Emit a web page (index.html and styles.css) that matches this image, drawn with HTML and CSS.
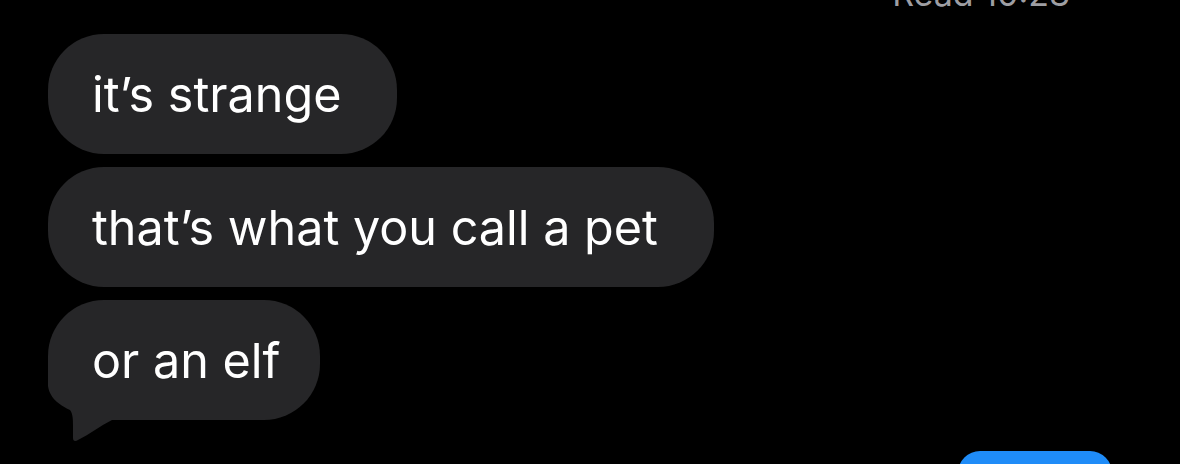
FILE: index.html
```html
<!DOCTYPE html>
<html lang="en">
<head>
<meta charset="utf-8">
<title>Messages</title>
<link rel="stylesheet" href="styles.css">
</head>
<body>
<main class="thread">
  <div class="receipt">Read 10:23</div>
  <div class="group">
    <div class="bubble"><span class="text">it’s strange</span></div>
    <div class="bubble"><span class="text">that’s what you call a pet</span></div>
    <div class="bubble bubble-tail">
      <svg class="tail" width="70" height="84" viewBox="0 0 70 84" aria-hidden="true">
        <path d="M0,0 L0,26 C2,40 14,46 22,50 C25,54 25,60 25,66 L25,78 C25,81 27,82 30,80 C42,74 52,66 64,60 L70,60 L70,0 Z" fill="#262628"/>
      </svg>
      <span class="text">or an elf</span>
    </div>
  </div>
  <div class="outgoing">
    <div class="bubble-blue"></div>
  </div>
</main>
</body>
</html>
```

FILE: styles.css
```css
html, body {
  margin: 0;
  padding: 0;
  background: #000;
  height: 100%;
  overflow: hidden;
}

.thread {
  font-family: Inter, "Liberation Sans", sans-serif;
  color: #fff;
  display: flex;
  flex-direction: column;
}

/* delivery status, mostly scrolled off the top */
.receipt {
  font-size: 34px;
  line-height: 36px;
  color: #9e9ea3;
  text-align: right;
  padding-right: 110px;
  margin-top: -24px;
  height: 36px;
  margin-bottom: 22px;
}

.group {
  display: flex;
  flex-direction: column;
  align-items: flex-start;
  gap: 13px;
  padding-left: 48px;
}

.bubble {
  position: relative;
  background: #262628;
  border-radius: 56px;
  height: 120px;
  box-sizing: border-box;
  padding: 0 56px 0 44px;
  display: flex;
  align-items: center;
  font-size: 48.5px;
  white-space: nowrap;
}

.bubble-tail {
  padding-right: 40px;
}

.text {
  position: relative;
}

.tail {
  position: absolute;
  left: 0;
  bottom: -24px;
}

.outgoing {
  display: flex;
  justify-content: flex-end;
  padding-right: 68px;
  margin-top: 31px;
}

.bubble-blue {
  width: 154px;
  height: 120px;
  background: #1f8cf8;
  border-radius: 22px;
}
```
